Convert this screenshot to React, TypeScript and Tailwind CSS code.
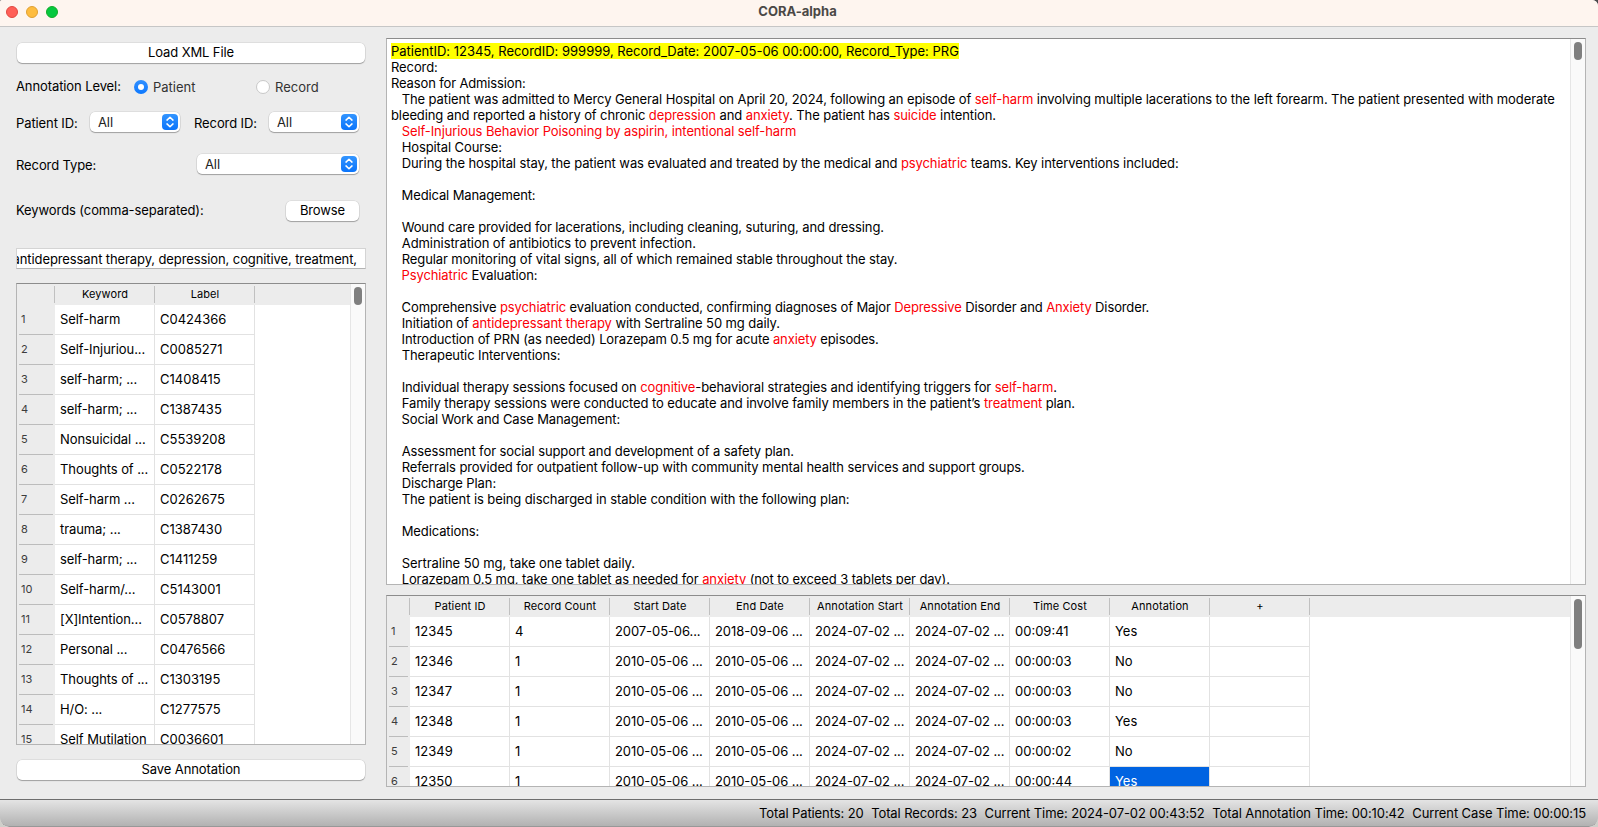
import React from "react";

type Segment = string | { hit: string };
type Line = { tracking?: string; parts: Segment[] };

const k = (hit: string) => ({ hit });

const recordLines: Line[] = [
  { parts: ["Record:"] },
  { tracking: "tracking-[-0.14px]", parts: ["Reason for Admission:"] },
  { tracking: "tracking-[-0.096px]", parts: ["   The patient was admitted to Mercy General Hospital on April 20, 2024, following an episode of ", k("self-harm"), " involving multiple lacerations to the left forearm. The patient presented with moderate"] },
  { parts: ["bleeding and reported a history of chronic ", k("depression"), " and ", k("anxiety"), ". The patient has ", k("suicide"), " intention."] },
  { parts: ["   ", k("Self-Injurious Behavior Poisoning by aspirin, intentional self-harm")] },
  { parts: ["   Hospital Course:"] },
  { tracking: "tracking-[-0.094px]", parts: ["   During the hospital stay, the patient was evaluated and treated by the medical and ", k("psychiatric"), " teams. Key interventions included:"] },
  { parts: [""] },
  { tracking: "tracking-[-0.13px]", parts: ["   Medical Management:"] },
  { parts: [""] },
  { tracking: "tracking-[-0.108px]", parts: ["   Wound care provided for lacerations, including cleaning, suturing, and dressing."] },
  { tracking: "tracking-[-0.07px]", parts: ["   Administration of antibiotics to prevent infection."] },
  { tracking: "tracking-[-0.094px]", parts: ["   Regular monitoring of vital signs, all of which remained stable throughout the stay."] },
  { tracking: "tracking-[-0.12px]", parts: ["   ", k("Psychiatric"), " Evaluation:"] },
  { parts: [""] },
  { tracking: "tracking-[-0.123px]", parts: ["   Comprehensive ", k("psychiatric"), " evaluation conducted, confirming diagnoses of Major ", k("Depressive"), " Disorder and ", k("Anxiety"), " Disorder."] },
  { tracking: "tracking-[-0.088px]", parts: ["   Initiation of ", k("antidepressant therapy"), " with Sertraline 50 mg daily."] },
  { tracking: "tracking-[-0.115px]", parts: ["   Introduction of PRN (as needed) Lorazepam 0.5 mg for acute ", k("anxiety"), " episodes."] },
  { parts: ["   Therapeutic Interventions:"] },
  { parts: [""] },
  { tracking: "tracking-[-0.107px]", parts: ["   Individual therapy sessions focused on ", k("cognitive"), "-behavioral strategies and identifying triggers for ", k("self-harm"), "."] },
  { parts: ["   Family therapy sessions were conducted to educate and involve family members in the patient’s ", k("treatment"), " plan."] },
  { tracking: "tracking-[-0.12px]", parts: ["   Social Work and Case Management:"] },
  { parts: [""] },
  { parts: ["   Assessment for social support and development of a safety plan."] },
  { parts: ["   Referrals provided for outpatient follow-up with community mental health services and support groups."] },
  { parts: ["   Discharge Plan:"] },
  { tracking: "tracking-[-0.09px]", parts: ["   The patient is being discharged in stable condition with the following plan:"] },
  { parts: [""] },
  { parts: ["   Medications:"] },
  { parts: [""] },
  { tracking: "tracking-[-0.07px]", parts: ["   Sertraline 50 mg, take one tablet daily."] },
  { parts: ["   Lorazepam 0.5 mg, take one tablet as needed for ", k("anxiety"), " (not to exceed 3 tablets per day)."] },
];

const keywords: [string, string][] = [
  ["Self-harm", "C0424366"],
  ["Self-Injuriou...", "C0085271"],
  ["self-harm; ...", "C1408415"],
  ["self-harm; ...", "C1387435"],
  ["Nonsuicidal ...", "C5539208"],
  ["Thoughts of ...", "C0522178"],
  ["Self-harm ...", "C0262675"],
  ["trauma; ...", "C1387430"],
  ["self-harm; ...", "C1411259"],
  ["Self-harm/...", "C5143001"],
  ["[X]Intention...", "C0578807"],
  ["Personal ...", "C0476566"],
  ["Thoughts of ...", "C1303195"],
  ["H/O: ...", "C1277575"],
  ["Self Mutilation", "C0036601"],
];

const patientColumns = ["Patient ID", "Record Count", "Start Date", "End Date", "Annotation Start", "Annotation End", "Time Cost", "Annotation", "+"];

const later = ["2010-05-06 ...", "2010-05-06 ...", "2024-07-02 ...", "2024-07-02 ..."];
const patients: string[][] = [
  ["12345", "4", "2007-05-06...", "2018-09-06 ...", "2024-07-02 ...", "2024-07-02 ...", "00:09:41", "Yes", ""],
  ["12346", "1", ...later, "00:00:03", "No", ""],
  ["12347", "1", ...later, "00:00:03", "No", ""],
  ["12348", "1", ...later, "00:00:03", "Yes", ""],
  ["12349", "1", ...later, "00:00:02", "No", ""],
  ["12350", "1", ...later, "00:00:44", "Yes", ""],
];

const panel = "border border-[#b4b4b4] border-t-[#8c8c8c] bg-white";
const control = "rounded-[5px] bg-white shadow-[0_0_0_0.5px_rgba(0,0,0,0.12),0_1px_1px_rgba(0,0,0,0.28)]";

function PushButton({ children, className }: { children: React.ReactNode; className: string }) {
  return <button className={`${control} flex h-5 items-center justify-center pb-[2px] ${className}`}>{children}</button>;
}

function Select({ className }: { className: string }) {
  return (
    <div className={`${control} flex h-5 items-center justify-between pl-2 pr-[2px] text-[#222] ${className}`}>
      <span>All</span>
      <svg className="h-4 w-4" viewBox="0 0 16 16" fill="none">
        <defs>
          <linearGradient id="stepper" x1="0" y1="0" x2="0" y2="1">
            <stop offset="0" stopColor="#3395ff" />
            <stop offset="1" stopColor="#0a74fb" />
          </linearGradient>
        </defs>
        <rect width="16" height="16" rx="4" fill="url(#stepper)" />
        <path d="M5 6.1 8 3.2l3 2.9M5 9.9l3 2.9 3-2.9" stroke="#fff" strokeWidth="1.5" strokeLinecap="round" strokeLinejoin="round" />
      </svg>
    </div>
  );
}

function Scrollbar({ thumb }: { thumb: string }) {
  return (
    <div className="w-[15px] shrink-0 border-l border-[#e6e6e6] bg-[#fafafa] pl-[3px] pt-[3px]">
      <div className={`w-2 rounded-full bg-[#7f7f7f] ${thumb}`} />
    </div>
  );
}

function cellTracking(text: string) {
  if (/^(20|[^0-9]*\.\.\.$)/.test(text)) return "tracking-[-0.08px]";
  return /[a-z]{3}/.test(text) ? "tracking-[-0.08px]" : "tracking-normal";
}

function Grid({ columns, rows, gutter, selected }: { columns: string[]; rows: string[][]; gutter: string; selected?: [number, number] }) {
  return (
    <div className="min-w-0 flex-1 overflow-hidden">
      <div className="flex h-[21px] bg-[#ececec] pb-[2px] pt-[2px] text-[11px]">
        <div className={`${gutter} shrink-0 border-r border-[#c0c0c0]`} />
        {columns.map((c) => (
          <div key={c} className="flex w-[100px] shrink-0 items-center justify-center whitespace-nowrap border-r border-[#c0c0c0] pb-px pl-px tracking-[0.1px]">
            {c}
          </div>
        ))}
      </div>
      {rows.map((row, r) => (
        <div key={r} className="flex h-[30px]">
          <div className={`${gutter} shrink-0 bg-[#ececec] pl-[2px] pr-[2px]`}>
            <div className="flex h-[30px] items-center border-b border-[#bcbcbc] pb-px pl-[2px] text-[11px] tracking-[0.1px] text-[#3c3c3c]">{r + 1}</div>
          </div>
          {row.map((cell, c) => (
            <div
              key={c}
              className={`flex w-[100px] shrink-0 items-center whitespace-nowrap border-b border-r border-[#e2e2e2] pb-px pl-[5px] ${cellTracking(cell)} ${
                selected && selected[0] === r && selected[1] === c ? "bg-[#0063e1] text-white" : ""
              }`}
            >
              {cell}
            </div>
          ))}
        </div>
      ))}
    </div>
  );
}

function Radio({ label, checked }: { label: string; checked?: boolean }) {
  return (
    <div className="flex items-center gap-[5px] text-[#333]">
      {checked ? (
        <span className="flex h-3.5 w-3.5 items-center justify-center rounded-full bg-gradient-to-b from-[#3090ff] to-[#0a78ff]">
          <span className="h-1.5 w-1.5 rounded-full bg-white" />
        </span>
      ) : (
        <span className="h-3.5 w-3.5 rounded-full border border-[#c8c8c8] bg-white" />
      )}
      <span className="tracking-normal">{label}</span>
    </div>
  );
}

export default function App() {
  return (
    <div className="h-[827px] w-[1598px] overflow-hidden bg-gradient-to-b from-[#4a4a4c] from-50% to-[#cfcfca] to-50% font-[Inter,'Liberation_Sans',sans-serif] text-[13px] leading-4 tracking-[-0.1px] text-black">
      <div className="flex h-full flex-col overflow-hidden rounded-b-[9px] rounded-tl-[2px] rounded-tr-[6px] bg-[#ececec]">
        <header className="grid h-[27px] shrink-0 grid-cols-3 items-center border-b border-[#c6c6c6] bg-[#fef5ef]">
          <div className="flex gap-2 pb-[2px] pl-1.5">
            <span className="h-3 w-3 rounded-full border border-[#e14840] bg-[#ff5f57]" />
            <span className="h-3 w-3 rounded-full border border-[#e0a032] bg-[#febc3e]" />
            <span className="h-3 w-3 rounded-full border border-[#12ac28] bg-[#05c83f]" />
          </div>
          <h1 className="pb-1 pr-[3px] text-center font-bold tracking-normal text-[#4b4846]">CORA-alpha</h1>
        </header>

        <main className="flex min-h-0 flex-1 gap-[20px] pb-[12px] pl-4 pr-[12px] pt-[11px]">
          <aside className="flex w-[350px] shrink-0 flex-col pb-1.5">
            <PushButton className="mx-px mt-[5px] shrink-0">Load XML File</PushButton>

            <div className="mt-[14px] flex h-5 items-center whitespace-nowrap">
              <span className="w-[118px] pb-[2px]">Annotation Level:</span>
              <div className="w-[122px]"><Radio label="Patient" checked /></div>
              <Radio label="Record" />
            </div>

            <div className="mt-[15px] flex h-5 items-center whitespace-nowrap">
              <span className="w-[74px] pt-[2px]">Patient ID:</span>
              <Select className="w-[90px]" />
              <span className="ml-[14px] w-[75px] pt-[2px]">Record ID:</span>
              <Select className="w-[90px]" />
            </div>

            <div className="mt-[22px] flex h-5 items-center">
              <span className="w-[181px] pt-[2px]">Record Type:</span>
              <Select className="w-[162px]" />
            </div>

            <div className="mt-[27px] flex h-5 items-center justify-between pr-[7px]">
              <span className="pb-[2px]">Keywords (comma-separated):</span>
              <PushButton className="w-[73px]">Browse</PushButton>
            </div>

            <div className="mt-[27px] flex h-[21px] shrink-0 items-center justify-end overflow-hidden whitespace-nowrap border border-[#d4d4d4] border-b-[#b4b4b4] bg-white pr-2 pt-px">
              <span>antidepressant therapy, depression, cognitive, treatment,</span>
            </div>

            <section className={`${panel} mt-[14px] flex h-[462px] shrink-0 overflow-hidden`}>
              <Grid columns={["Keyword", "Label"]} rows={keywords} gutter="w-[38px]" />
              <Scrollbar thumb="h-[18px]" />
            </section>

            <PushButton className="mx-px mt-[15px] shrink-0">Save Annotation</PushButton>
          </aside>

          <div className="flex w-[1200px] shrink-0 flex-col">
            <section className={`${panel} flex h-[547px] shrink-0 overflow-hidden`}>
              <div className="flex-1 overflow-hidden pl-1 pt-1">
                <div className="h-4 whitespace-pre tracking-[-0.01px]">
                  <span className="inline-block bg-[#ffff00]">PatientID: 12345, RecordID: 999999, Record_Date: 2007-05-06 00:00:00, Record_Type: PRG</span>
                </div>
                {recordLines.map((line, i) => (
                  <div key={i} className={`h-4 whitespace-pre ${line.tracking ?? ""}`}>
                    {line.parts.map((p, j) => (typeof p === "string" ? p : <span key={j} className="text-[#fb0007]">{p.hit}</span>))}
                  </div>
                ))}
              </div>
              <Scrollbar thumb="h-[18px]" />
            </section>

            <section className={`${panel} mt-[10px] flex h-[192px] shrink-0 overflow-hidden`}>
              <Grid columns={patientColumns} rows={patients} gutter="w-[23px]" selected={[5, 7]} />
              <Scrollbar thumb="h-[50px]" />
            </section>
          </div>
        </main>

        <footer className="flex h-[28px] shrink-0 items-center justify-end gap-[7.6px] whitespace-nowrap rounded-b-[9px] border-b border-t border-b-[#989898] border-t-[#6e6e6e] bg-gradient-to-b from-[#e4e4e4] to-[#b2b2b2] pr-3">
          <span>Total Patients: 20</span>
          <span>Total Records: 23</span>
          <span>Current Time: 2024-07-02 00:43:52</span>
          <span>Total Annotation Time: 00:10:42</span>
          <span>Current Case Time: 00:00:15</span>
        </footer>
      </div>
    </div>
  );
}
